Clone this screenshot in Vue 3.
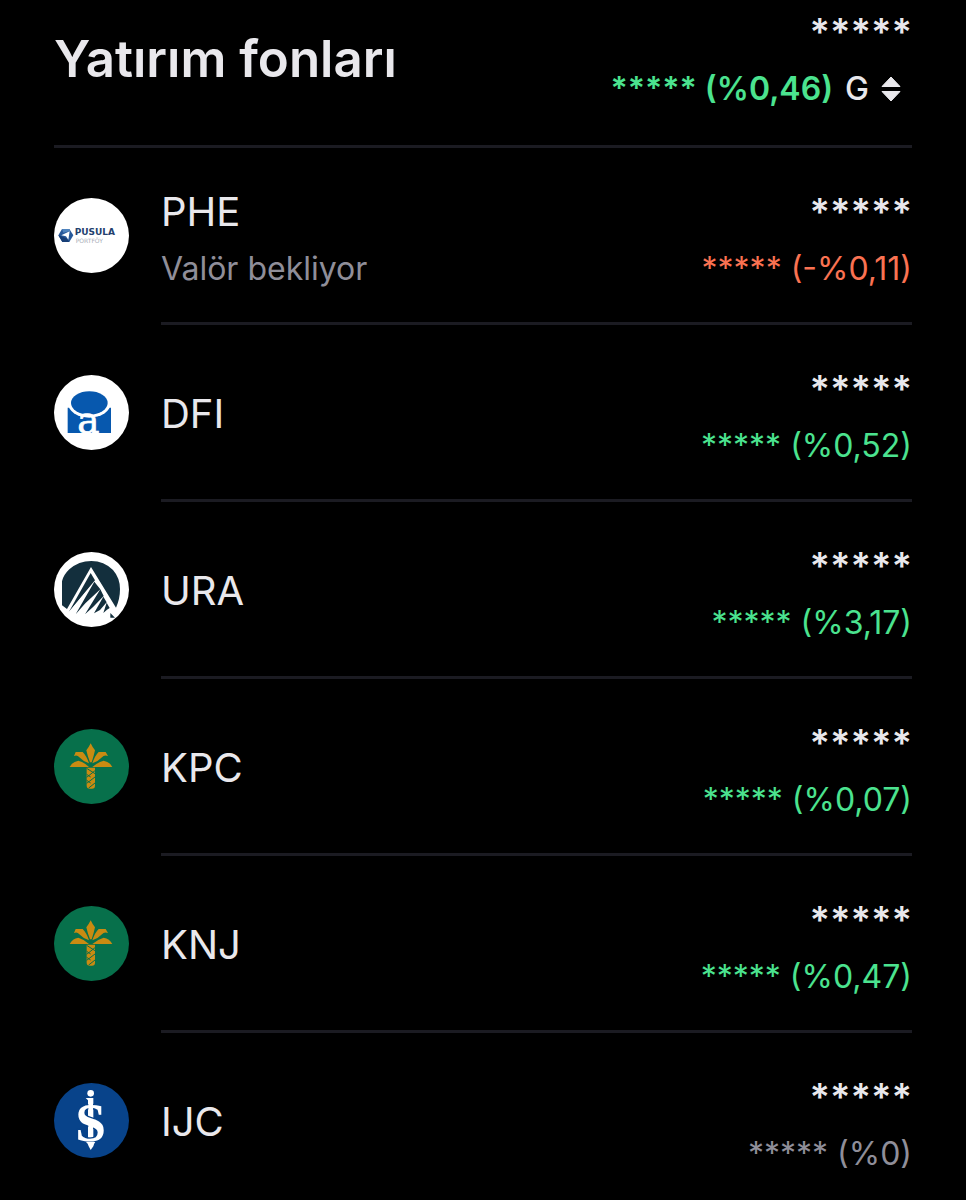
<script setup>
const funds = [
  { code: 'PHE', note: 'Valör bekliyor', logo: 'pusula', change: '***** (-%0,11)', tone: 'down' },
  { code: 'DFI', logo: 'atlas', change: '***** (%0,52)', tone: 'up' },
  { code: 'URA', logo: 'peak', change: '***** (%3,17)', tone: 'up' },
  { code: 'KPC', logo: 'palm', change: '***** (%0,07)', tone: 'up' },
  { code: 'KNJ', logo: 'palm', change: '***** (%0,47)', tone: 'up' },
  { code: 'IJC', logo: 'is', change: '***** (%0)', tone: 'flat' },
]
</script>

<template>
  <main class="page">
    <header class="head">
      <h1 class="title">Yatırım fonları</h1>
      <div class="summary">
        <div class="total">*****</div>
        <button class="sort" type="button">
          <span class="sort-change">***** (%0,46)</span>
          <span class="period">G</span>
          <svg class="arrows" viewBox="0 0 20 26" aria-hidden="true">
            <path d="M10 1 19 10.500H1Z M10 25 19 15.500H1Z" fill="#e9e8ec" stroke="#e9e8ec" stroke-width="1" stroke-linejoin="round" />
          </svg>
        </button>
      </div>
    </header>

    <ul class="list">
      <li v-for="fund in funds" :key="fund.code" class="row">
        <svg class="logo" viewBox="42 39 225 225" aria-hidden="true">
          <template v-if="fund.logo === 'pusula'">
            <circle cx="154.500" cy="151.500" r="112.500" fill="#fff" />
            <path d="M66 132H88L100 151 88 171H67L55 151Z" fill="#28599a" />
            <path d="M55 151 67 171H88L80 160Z" fill="#173e76" />
            <path d="M66 132H88L91 138 70 143Z" fill="#4f83bd" />
            <path d="M64 151 89 139 85 164 78 154Z" fill="#fff" />
            <text x="104" y="151" class="brand">PUSULA</text>
            <text x="107" y="175" class="brand-sub">PORTFÖY</text>
          </template>
          <template v-else-if="fund.logo === 'atlas'">
            <circle cx="154.500" cy="151.500" r="112.500" fill="#fff" />
            <path d="M83 137H213V213H83Z" fill="#0758ae" />
            <ellipse cx="148" cy="124" rx="64" ry="43" fill="#fff" />
            <ellipse cx="148" cy="123" rx="55" ry="35" fill="#0758ae" />
            <text x="112" y="212" class="letter-a">a</text>
          </template>
          <template v-else-if="fund.logo === 'peak'">
            <circle cx="154.500" cy="151.500" r="112.500" fill="#fff" />
            <path d="M66 199V127Q70 108 88 91 116 66 154 66 192 66 219 93 240 117 240 150 240 180 228 206L153 84 81 210Z" fill="#132f3d" />
            <path d="M152 102 86 220 165 124Z" fill="#132f3d" />
            <path d="M82 224 163 128 108 225 181 151 139 225 190 171 163 226 199 190 190 226 208 204 217 237H84Z" fill="#fff" />
            <path d="M163 128 181 151 136 193 107 226Z M181 151 191 171 160 203 135 226Z M190 173 200 190 180 213 162 223Z M200 191 209 207 201 212 190 222Z M211 222 225 236H211Z" fill="#132f3d" />
          </template>
          <template v-else-if="fund.logo === 'palm'">
            <circle cx="154.500" cy="151.500" r="112.500" fill="#07704b" />
            <g fill="#c98b12">
              <path d="M152 82Q157 93 165 103 161 122 155 139H150Q143 122 139 103 147 93 152 82Z" />
              <path d="M107 108H128Q140 120 147 142 130 137 118 124 112 116 102 120Z" />
              <path d="M197 108H176Q164 120 157 142 174 137 186 124 192 116 204 120Z" />
              <path d="M89 153Q97 137 115 134 133 139 147 153Z" />
              <path d="M217 153Q209 137 191 134 173 139 157 153Z" />
              <path d="M140 155H165V209Q165 218 156 218H149Q140 218 140 209Z" />
            </g>
            <g fill="none" stroke="#07704b" stroke-width="3">
              <path d="M140 157 165 173M140 175 152 183M140 193 152 201M165 164 140 184M165 183 140 202M165 201 146 216" />
            </g>
          </template>
          <template v-else>
            <circle cx="154.500" cy="151.500" r="112.500" fill="#08438a" />
            <circle cx="152" cy="70" r="10" fill="#fff" />
            <path d="M137 84H160V203H144V91Z" fill="#fff" />
            <text x="152" y="213" class="letter-s">S</text>
            <path d="M145 95H159V132L145 124Z M145 156 159 164V198H145Z" fill="#fff" />
            <path d="M138 216H166Q162 220 160 229L152 240 146 229Q144 220 138 216Z" fill="#fff" />
          </template>
        </svg>
        <div class="body">
          <div class="name">
            <div class="code">{{ fund.code }}</div>
            <div v-if="fund.note" class="note">{{ fund.note }}</div>
          </div>
          <div class="figures">
            <div class="amount">*****</div>
            <div class="change" :class="fund.tone">{{ fund.change }}</div>
          </div>
        </div>
      </li>
    </ul>
  </main>
</template>

<style>
body {
  margin: 0;
  background: #000;
}
</style>

<style scoped>
.page {
  padding: 0 54px;
  background: #000;
  color: #e9e8ec;
  font-family: Inter, "Liberation Sans", sans-serif;
}
.head {
  display: flex;
  justify-content: space-between;
  align-items: flex-start;
  padding-bottom: 27px;
  border-bottom: 3px solid #1b1b22;
}
.title {
  margin: 0;
  font-size: 51px;
  font-weight: 600;
  line-height: 118px;
}
.summary {
  display: flex;
  flex-direction: column;
  align-items: flex-end;
}
.total,
.amount {
  font-size: 38px;
  font-weight: 600;
  line-height: 64px;
}
.sort {
  display: flex;
  align-items: center;
  gap: 12px;
  padding: 0 11px 0 0;
  border: 0;
  background: none;
  color: inherit;
  font: inherit;
  font-size: 32px;
  line-height: 50px;
  cursor: pointer;
}
.sort-change {
  color: #4be38f;
  font-weight: 600;
}
.period {
  font-weight: 500;
}
.arrows {
  width: 20px;
  height: 26px;
}
.list {
  margin: 0;
  padding: 0;
  list-style: none;
}
.row {
  display: flex;
  gap: 32px;
}
.logo {
  flex: none;
  width: 75px;
  height: 75px;
  margin-top: 50px;
}
.body {
  flex: 1;
  display: flex;
  justify-content: space-between;
  align-items: center;
  padding: 32px 0 28px;
  border-bottom: 3px solid #1b1b22;
}
.row:last-child .body {
  padding-bottom: 21px;
  border-bottom: 0;
}
.code {
  font-size: 40px;
  line-height: 64px;
}
.note {
  color: #8f8e99;
}
.note,
.change {
  font-size: 32px;
  line-height: 50px;
}
.figures {
  text-align: right;
}
.up {
  color: #4be38f;
}
.down {
  color: #fa7252;
}
.flat {
  color: #8f8e99;
}
.brand {
  fill: #24416e;
  font: bold 27px "DejaVu Sans", sans-serif;
}
.brand-sub {
  fill: #a9aeb8;
  font: 18px "DejaVu Sans", sans-serif;
}
.letter-a {
  fill: #fff;
  stroke: #fff;
  stroke-width: 2px;
  font: 112px "DejaVu Serif", serif;
}
.letter-s {
  fill: #fff;
  stroke: #08438a;
  stroke-width: 8px;
  paint-order: stroke;
  font: bold 166px "Liberation Serif", serif;
  text-anchor: middle;
}
</style>
